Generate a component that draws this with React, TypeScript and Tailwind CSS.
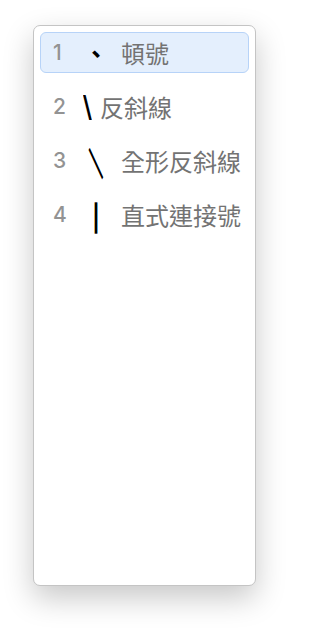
const rows = [
  { n: '1', sym: '、', label: '頓號', numW: 'w-[31px]', symW: 'w-[24px]', gap: 'ml-[13px]', symCls: 'text-[24px] font-bold', active: true },
  { n: '2', sym: '\\', label: '反斜線', numW: 'w-[28px]', symW: 'w-[12px]', gap: 'ml-[7px]', symCls: 'text-[30px] font-bold font-["DejaVu_Sans",sans-serif] scale-x-[0.8]', active: false },
  { n: '3', sym: '＼', label: '全形反斜線', numW: 'w-[31px]', symW: 'w-[24px]', gap: 'ml-[13px]', symCls: 'text-[26px] [-webkit-text-stroke:1.6px_black] scale-x-[0.55] scale-y-[1.2] translate-y-[1px]', active: false },
  { n: '4', sym: '｜', label: '直式連接號', numW: 'w-[31px]', symW: 'w-[24px]', gap: 'ml-[13px]', symCls: 'text-[30px] [-webkit-text-stroke:1.4px_black] translate-y-[1px]', active: false },
];

export default function App() {
  return (
    <div className="w-[290px] h-[628px] bg-white pt-[25px] pl-[33px]">
      <div className="w-[223px] h-[561px] rounded-[7px] border border-[#c4c4c4] bg-white shadow-[0_12px_30px_rgba(0,0,0,0.22)] p-[6px] flex flex-col gap-[13px]">
        {rows.map(r => (
          <div
            key={r.n}
            className={`h-[41px] flex items-center pl-[12px] rounded-[6px] border ${
              r.active ? 'bg-[#e4effd] border-[#b7d3f8]' : 'border-transparent'
            }`}
          >
            <span className={`${r.numW} text-[21px] font-medium text-[#939393] font-['Inter',sans-serif] leading-none`}>
              {r.n}
            </span>
            <span className={`${r.symW} flex justify-center text-black font-['Noto_Sans_CJK_TC',sans-serif] leading-none`}>
              <span className={`inline-block ${r.symCls}`}>{r.sym}</span>
            </span>
            <span className={`${r.gap} text-[24px] text-[#737373] font-['Noto_Sans_CJK_TC',sans-serif] leading-none whitespace-nowrap`}>
              {r.label}
            </span>
          </div>
        ))}
      </div>
    </div>
  );
}
